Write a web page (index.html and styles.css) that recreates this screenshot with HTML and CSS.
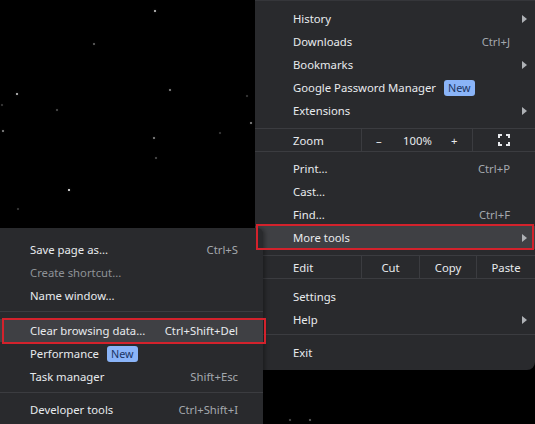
FILE: index.html
```html
<!DOCTYPE html>
<html>
<head>
<meta charset="utf-8">
<link rel="stylesheet" href="styles.css">
</head>
<body>
<div class="stage">
  <div class="stars">
    <i></i><i></i><i></i><i></i><i></i><i></i><i></i><i></i><i></i><i></i><i></i><i></i><i></i><i></i><i></i><i></i>
  </div>

  <div class="menu main">
    <div class="row"><span class="label">History</span><span class="arrow"></span></div>
    <div class="row"><span class="label">Downloads</span><span class="key">Ctrl+J</span></div>
    <div class="row"><span class="label">Bookmarks</span><span class="arrow"></span></div>
    <div class="row"><span class="label">Google Password Manager</span><span class="badge">New</span></div>
    <div class="row"><span class="label">Extensions</span><span class="arrow"></span></div>
    <div class="gap6"></div>
    <div class="split zoom">
      <div class="cell first">Zoom</div>
      <div class="cell zoomctl"><span class="minus">–</span><span class="pct">100%</span><span class="plus">+</span></div>
      <div class="cell full">
        <svg width="12" height="12" viewBox="0 0 12 12" fill="none" stroke="#e8eaed" stroke-width="2">
          <path d="M1 4V1H4M8 1H11V4M11 8V11H8M4 11H1V8"/>
        </svg>
      </div>
    </div>
    <div class="gap5"></div>
    <div class="row"><span class="label">Print...</span><span class="key">Ctrl+P</span></div>
    <div class="row"><span class="label">Cast...</span></div>
    <div class="row"><span class="label">Find...</span><span class="key">Ctrl+F</span></div>
    <div class="row hl"><span class="label">More tools</span><span class="arrow"></span></div>
    <div class="gap6"></div>
    <div class="split edit">
      <div class="cell first">Edit</div>
      <div class="cell btn">Cut</div>
      <div class="cell btn">Copy</div>
      <div class="cell btn">Paste</div>
    </div>
    <div class="gap6"></div>
    <div class="row"><span class="label">Settings</span></div>
    <div class="row"><span class="label">Help</span><span class="arrow"></span></div>
    <div class="sep sep-main"></div>
    <div class="row"><span class="label">Exit</span></div>
  </div>

  <div class="menu sub">
    <div class="row"><span class="label">Save page as...</span><span class="key">Ctrl+S</span></div>
    <div class="row"><span class="label dim">Create shortcut...</span></div>
    <div class="row"><span class="label">Name window...</span></div>
    <div class="sep sep-a"></div>
    <div class="row hl"><span class="label">Clear browsing data...</span><span class="key bright">Ctrl+Shift+Del</span></div>
    <div class="row"><span class="label">Performance</span><span class="badge">New</span></div>
    <div class="row"><span class="label">Task manager</span><span class="key">Shift+Esc</span></div>
    <div class="sep sep-b"></div>
    <div class="row"><span class="label">Developer tools</span><span class="key">Ctrl+Shift+I</span></div>
  </div>

  <div class="mark mark-more"></div>
  <div class="mark mark-clear"></div>
</div>
</body>
</html>
```

FILE: styles.css
```css
* { box-sizing: border-box; }
html, body { margin: 0; padding: 0; background: #000; }
body {
  font-family: "Noto Sans", "Open Sans", sans-serif;
  font-size: 11.3px;
  color: #e8eaed;
}
.stage {
  position: relative;
  width: 535px;
  height: 424px;
  overflow: hidden;
  background: #000;
}

/* stars */
.stars i {
  position: absolute;
  width: 2px;
  height: 2px;
  border-radius: 50%;
  background: #cfcfcf;
  box-shadow: 0 0 2px 0 rgba(200,200,200,0.35);
}
.stars i:nth-child(1)  { left: 154px; top: 10px; }
.stars i:nth-child(2)  { left: 93px;  top: 43px; opacity: .5; }
.stars i:nth-child(3)  { left: 16px;  top: 93px; }
.stars i:nth-child(4)  { left: 169px; top: 89px; opacity: .7; }
.stars i:nth-child(5)  { left: 2px;   top: 130px; opacity: .7; }
.stars i:nth-child(6)  { left: 56px;  top: 109px; opacity: .4; }
.stars i:nth-child(7)  { left: 153px; top: 137px; opacity: .7; }
.stars i:nth-child(8)  { left: 155px; top: 157px; opacity: .4; }
.stars i:nth-child(9)  { left: 68px;  top: 189px; background: #fff; }
.stars i:nth-child(10) { left: 250px; top: 122px; opacity: .7; }
.stars i:nth-child(11) { left: 246px; top: 95px;  opacity: .3; }
.stars i:nth-child(12) { left: 219px; top: 132px; opacity: .3; }
.stars i:nth-child(13) { left: 17px;  top: 208px; opacity: .3; }
.stars i:nth-child(14) { left: 1px;   top: 104px; opacity: .3; }
.stars i:nth-child(15) { left: 289px; top: 419px; opacity: .4; }
.stars i:nth-child(16) { left: 309px; top: 419px; opacity: .5; }

/* menus */
.menu {
  background: #292a2d;
}
.main {
  position: relative;
  margin-left: 255px;
  width: 280px;
  padding: 6px 0 6px;
  border-radius: 0 0 8px 8px;
  border-top: 1px solid #35363a;
}
.sub {
  position: absolute;
  left: 0;
  top: 228px;
  width: 263px;
  height: 210px;
  padding-top: 10px;
  border-radius: 0 6px 0 0;
  box-shadow: 2px 0 4px rgba(0,0,0,0.35);
}

.row {
  display: flex;
  align-items: center;
  height: 23px;
  white-space: nowrap;
}
.main .row { padding: 0 8px 0 38px; }
.sub .row { padding: 0 25px 0 30px; }
.main .row .key { margin-right: 17px; }

.label { flex: none; }
.label.dim { color: #8e9297; }
.key {
  margin-left: auto;
  color: #a4a8ad;
}
.key.bright { color: #e8eaed; }
.arrow {
  margin-left: auto;
  width: 0; height: 0;
  border-top: 4px solid transparent;
  border-bottom: 4px solid transparent;
  border-left: 5px solid #aeb1b5;
}
.badge {
  margin-left: 8px;
  background: #8ab4f8;
  color: #1b3563;
  border-radius: 3px;
  height: 16px;
  line-height: 16px;
  padding: 0 4px;
  font-size: 10.8px;
}
.row.hl { background: #3f4044; }

.gap6 { height: 6px; }
.gap5 { height: 5px; }

.split {
  display: flex;
  height: 24px;
  border-top: 1px solid #3b3c40;
  border-bottom: 1px solid #3b3c40;
}
.cell {
  display: flex;
  align-items: center;
}
.cell.first {
  width: 107px;
  padding-left: 38px;
  border-right: 1px solid #3b3c40;
}
.zoomctl {
  width: 111px;
  border-right: 1px solid #3b3c40;
  padding-left: 14px;
}
.minus { width: 27px; }
.pct { width: 48px; }
.full {
  flex: 1;
  justify-content: center;
}
.btn {
  justify-content: center;
  width: 58px;
  border-right: 1px solid #3b3c40;
}
.btn:nth-child(3) { width: 57px; }
.btn:last-child { border-right: none; flex: 1; }

.sep { position: relative; }
.sep::after {
  content: "";
  position: absolute;
  left: 0; right: 0;
  height: 1px;
  background: #3b3c40;
}
.sep-main { height: 10px; }
.sep-main::after { top: 3px; }
.sep-a { height: 12px; }
.sep-a::after { top: 4px; }
.sep-b { height: 10px; }
.sep-b::after { top: 4px; }

/* red annotation boxes */
.mark {
  position: absolute;
  border: 2px solid #d3222c;
}
.mark-more { left: 256px; top: 224px; width: 278px; height: 26px; }
.mark-clear { left: 2px; top: 318px; width: 264px; height: 26px; }
```
